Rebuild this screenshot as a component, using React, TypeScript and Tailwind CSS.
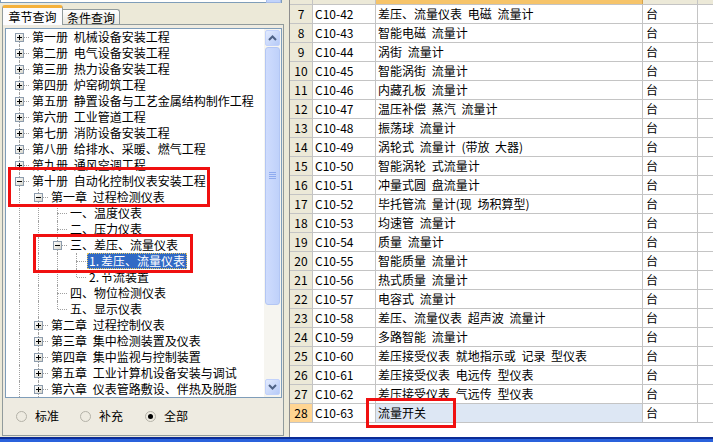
import React from "react";

type TNode = {
  label: React.ReactNode;
  level: number;
  exp?: "+" | "-";
  anc: boolean[];
  first?: boolean;
  last?: boolean;
  sel?: boolean;
};

const L0 = (label: string, exp: "+" | "-" = "+", first = false): TNode => ({ label, level: 0, exp, anc: [], first });
const L1 = (label: string, exp: "+" | "-" = "+"): TNode => ({ label, level: 1, exp, anc: [true] });

const tree: TNode[] = [
  L0("第一册 机械设备安装工程", "+", true),
  L0("第二册 电气设备安装工程"),
  L0("第三册 热力设备安装工程"),
  L0("第四册 炉窑砌筑工程"),
  L0("第五册 静置设备与工艺金属结构制作工程"),
  L0("第六册 工业管道工程"),
  L0("第七册 消防设备安装工程"),
  L0("第八册 给排水、采暖、燃气工程"),
  L0("第九册 通风空调工程"),
  L0("第十册 自动化控制仪表安装工程", "-"),
  L1("第一章 过程检测仪表", "-"),
  { label: "一、温度仪表", level: 2, anc: [true, true] },
  { label: "二、压力仪表", level: 2, anc: [true, true] },
  { label: "三、差压、流量仪表", level: 2, exp: "-", anc: [true, true] },
  {
    label: (
      <>
        <span className="mr-[2px]">1.</span>差压、流量仪表
      </>
    ),
    level: 3,
    anc: [true, true, true],
    sel: true,
  },
  {
    label: (
      <>
        <span className="mr-[2px]">2.</span>节流装置
      </>
    ),
    level: 3,
    anc: [true, true, true],
    last: true,
  },
  { label: "四、物位检测仪表", level: 2, anc: [true, true] },
  { label: "五、显示仪表", level: 2, anc: [true, true], last: true },
  L1("第二章 过程控制仪表"),
  L1("第三章 集中检测装置及仪表"),
  L1("第四章 集中监视与控制装置"),
  L1("第五章 工业计算机设备安装与调试"),
  L1("第六章 仪表管路敷设、伴热及脱脂"),
];

const rows: [string, string, string][] = [
  ["7", "C10-42", "差压、流量仪表 电磁 流量计"],
  ["8", "C10-43", "智能电磁 流量计"],
  ["9", "C10-44", "涡街 流量计"],
  ["10", "C10-45", "智能涡街 流量计"],
  ["11", "C10-46", "内藏孔板 流量计"],
  ["12", "C10-47", "温压补偿 蒸汽 流量计"],
  ["13", "C10-48", "振荡球 流量计"],
  ["14", "C10-49", "涡轮式 流量计 (带放 大器)"],
  ["15", "C10-50", "智能涡轮 式流量计"],
  ["16", "C10-51", "冲量式圆 盘流量计"],
  ["17", "C10-52", "毕托管流 量计(现 场积算型)"],
  ["18", "C10-53", "均速管 流量计"],
  ["19", "C10-54", "质量 流量计"],
  ["20", "C10-55", "智能质量 流量计"],
  ["21", "C10-56", "热式质量 流量计"],
  ["22", "C10-57", "电容式 流量计"],
  ["23", "C10-58", "差压、流量仪表 超声波 流量计"],
  ["24", "C10-59", "多路智能 流量计"],
  ["25", "C10-60", "差压接受仪表 就地指示或 记录 型仪表"],
  ["26", "C10-61", "差压接受仪表 电远传 型仪表"],
  ["27", "C10-62", "差压接受仪表 气远传 型仪表"],
  ["28", "C10-63", "流量开关"],
];

function Expander({ sign }: { sign: "+" | "-" }) {
  return (
    <div className="absolute left-[5px] top-[4px] w-[9px] h-[9px] border border-[#8d9cad] bg-gradient-to-br from-white to-[#d8d6cc] flex items-center justify-center">
      <svg width="7" height="7" viewBox="0 0 7 7">
        <rect x="1" y="3" width="5" height="1" fill="#000" />
        {sign === "+" && <rect x="3" y="1" width="1" height="5" fill="#000" />}
      </svg>
    </div>
  );
}

function TreeRow({ n }: { n: TNode }) {
  return (
    <div className="flex h-[16px] pl-[4px] whitespace-nowrap">
      {n.anc.map((on, i) => (
        <div key={i} className="relative w-[19px] h-[16px] shrink-0">
          {on && <div className="absolute left-[9px] top-0 h-[16px] w-0 border-l border-dotted border-[#a0a0a0]" />}
        </div>
      ))}
      <div className="relative w-[19px] h-[16px] shrink-0">
        {!n.first && <div className="absolute left-[9px] top-0 h-[8px] w-0 border-l border-dotted border-[#a0a0a0]" />}
        {!n.last && <div className="absolute left-[9px] top-[8px] h-[8px] w-0 border-l border-dotted border-[#a0a0a0]" />}
        <div className="absolute left-[10px] top-[8px] w-[9px] h-0 border-t border-dotted border-[#a0a0a0]" />
        {n.exp && <Expander sign={n.exp} />}
      </div>
      <div
        className={
          "ml-[1px] px-[1px] h-[16px] leading-[14px] " +
          (n.sel
            ? "bg-[#316ac5] text-white border border-dotted border-[#e8c860]"
            : "border border-transparent")
        }
      >
        {n.label}
      </div>
    </div>
  );
}

function ScrollBtn({ dir }: { dir: "up" | "down" }) {
  return (
    <div className="w-[15px] h-[16px] rounded-[2px] border border-[#c2d2fb] bg-gradient-to-br from-[#e3ebfe] to-[#b6caf7] flex items-center justify-center">
      <svg width="9" height="6" viewBox="0 0 9 6">
        {dir === "up" ? (
          <polyline points="1,5 4.5,1.5 8,5" fill="none" stroke="#4d6185" strokeWidth="2" />
        ) : (
          <polyline points="1,1 4.5,4.5 8,1" fill="none" stroke="#4d6185" strokeWidth="2" />
        )}
      </svg>
    </div>
  );
}

function ScrollBar() {
  return (
    <div className="w-[17px] h-full shrink-0 bg-[#f6f5f0] flex flex-col items-center pt-[1px] pb-[2px]">
      <ScrollBtn dir="up" />
      <div className="mt-[1px] w-[15px] h-[258px] rounded-[3px] border border-[#b3c6f4] bg-gradient-to-r from-[#cfdcfd] to-[#bfd1fa] flex items-center justify-center">
        <svg width="7" height="8" viewBox="0 0 7 8">
          {[0, 2, 4, 6].map((y) => (
            <rect key={y} x="0" y={y} width="7" height="1" fill="#8fabef" />
          ))}
        </svg>
      </div>
      <div className="flex-1" />
      <ScrollBtn dir="down" />
    </div>
  );
}

function Radio({ label, checked, className }: { label: string; checked?: boolean; className?: string }) {
  return (
    <div className={"flex items-center gap-[8px] " + (className ?? "")}>
      <div className="w-[11px] h-[11px] rounded-full border border-[#b4b2a8] flex items-center justify-center">
        {checked && <div className="w-[5px] h-[5px] rounded-full bg-black" />}
      </div>
      <span className="leading-[16px]">{label}</span>
    </div>
  );
}

function LeftPanel() {
  return (
    <div className="w-[289px] shrink-0 flex flex-col">
      <div className="h-[3px] flex">
        <div className="w-[266px] h-[3px] bg-white border-l border-b border-[#7f9db9]" />
        <div className="w-[15px] h-[3px] bg-[#c1d3fb] border-x border-b border-[#a8bdea]" />
        <div className="w-[1px] h-[3px] bg-[#7f9db9]" />
      </div>
      <div className="h-[21px] flex items-end pl-[2px] relative z-10">
        <div className="w-[61px] h-[20px] -mb-px bg-[#fcfcfe] border-x border-[#919b9c] border-t-[3px] border-t-[#f4b13c] rounded-t-[3px] flex items-center justify-center leading-[14px]">
          章节查询
        </div>
        <div className="w-[57px] h-[15px] border-t border-r border-[#919b9c] rounded-tr-[3px] bg-gradient-to-b from-white to-[#e9e8e1] flex items-center justify-center leading-[14px] pt-[2px]">
          条件查询
        </div>
      </div>
      <div className="ml-[2px] w-[282px] h-[412px] border border-[#919b9c] bg-[#eeebe1] flex flex-col pt-[3px]">
        <div className="ml-[2px] w-[277px] h-[370px] border border-[#7f9db9] bg-white flex">
          <div className="flex-1 overflow-hidden">
            {tree.map((n, i) => (
              <TreeRow key={i} n={n} />
            ))}
          </div>
          <ScrollBar />
        </div>
        <div className="h-[37px] flex items-center pb-[1px]">
          <Radio label="标准" className="ml-[13px]" />
          <Radio label="补充" className="ml-[21px]" />
          <Radio label="全部" checked className="ml-[22px]" />
        </div>
      </div>
    </div>
  );
}

function TablePane() {
  return (
    <div className="flex-1 border-l border-[#8e8e8e] bg-white flex flex-col overflow-hidden">
      <div className="h-[5px] flex shrink-0 border-b border-[#c4c4c4]">
        <div className="w-[23px] shrink-0 bg-[#ece9d8] border-r border-[#c4c4c4]" />
        <div className="w-[63px] shrink-0 bg-[#ece9d8] border-r border-[#c4c4c4]" />
        <div className="w-[267px] shrink-0 bg-[#f6c46a] border-r border-[#d6a24a]" />
        <div className="w-[55px] shrink-0 bg-[#ece9d8] border-r border-[#c4c4c4]" />
        <div className="flex-1 bg-[#ece9d8]" />
      </div>
      {rows.map(([no, code, name]) => {
        const last = no === "28";
        return (
          <div key={no} className="h-[19px] flex shrink-0 border-b border-[#c4c4c4] leading-[18px] whitespace-nowrap">
            <div
              className={
                "w-[23px] shrink-0 border-r border-[#c4c4c4] text-center " +
                (last ? "bg-[#ffd592]" : "bg-[#ece9d8]")
              }
            >
              {no}
            </div>
            <div className="w-[63px] shrink-0 border-r border-[#c4c4c4] pl-[2px]">{code}</div>
            <div
              className={
                "w-[267px] shrink-0 border-r border-[#c4c4c4] pl-[2px] " + (last ? "bg-[#dde7f4]" : "")
              }
            >
              {name}
            </div>
            <div className="w-[55px] shrink-0 border-r border-[#c4c4c4] pl-[3px]">台</div>
            <div className="flex-1" />
          </div>
        );
      })}
      <div className="flex-1" />
    </div>
  );
}

export default function App() {
  return (
    <div className="relative w-[713px] h-[442px] overflow-hidden bg-[#ece9d8] text-[12px] text-black font-['Noto_Sans_CJK_SC',sans-serif] [word-spacing:3px] flex flex-col">
      <div className="flex h-[437px] shrink-0">
        <LeftPanel />
        <TablePane />
      </div>
      <div className="h-[5px] border-t-[2px] border-[#0c2c96] bg-[#2a62dc]" />

      <div className="absolute left-[8px] top-[167px] w-[202px] h-[40px] border-[3px] border-[#f01010] pointer-events-none" />
      <div className="absolute left-[33px] top-[234px] w-[160px] h-[39px] border-[3px] border-[#f01010] pointer-events-none" />
      <div className="absolute left-[366px] top-[398px] w-[90px] h-[30px] border-[3px] border-[#f01010] pointer-events-none" />
    </div>
  );
}
